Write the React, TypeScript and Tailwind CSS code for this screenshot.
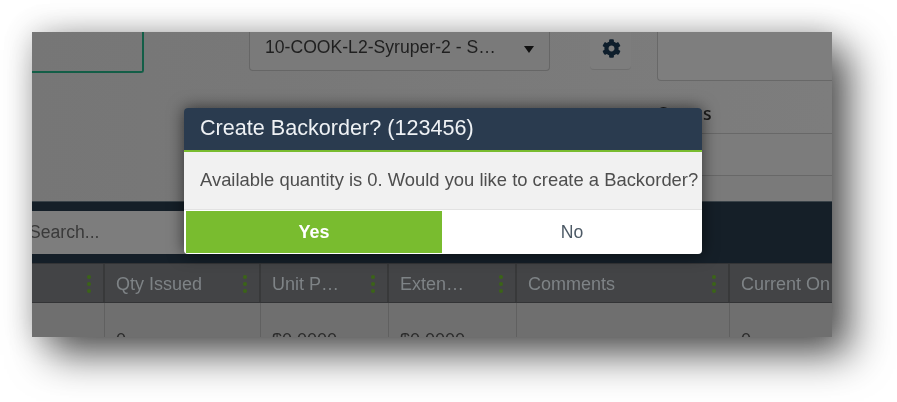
import { FaCog } from "react-icons/fa";

const columns = [
  { title: "", width: "w-[73px]", value: "" },
  { title: "Qty Issued", width: "w-[156px]", value: "0" },
  { title: "Unit P…", width: "w-[128px]", value: "$0.0000" },
  { title: "Exten…", width: "w-[128px]", value: "$0.0000" },
  { title: "Comments", width: "w-[213px]", value: "" },
  { title: "Current On Hand", width: "w-[160px]", value: "0" },
];

const Kebab = () => (
  <div className="flex flex-col gap-[3px]">
    <span className="w-[4px] h-[4px] rounded-full bg-[#3b6418]" />
    <span className="w-[4px] h-[4px] rounded-full bg-[#3b6418]" />
    <span className="w-[4px] h-[4px] rounded-full bg-[#3b6418]" />
  </div>
);

export default function App() {
  return (
    <div className="w-[897px] h-[402px] bg-white pt-8 pl-8 font-['Liberation_Sans',Arial,sans-serif] overflow-hidden">
      <div className="relative w-[800px] h-[305px] bg-[#797979] shadow-[18px_18px_38px_rgba(0,0,0,0.64),0_0_28px_rgba(0,0,0,0.2)]">
        <div className="relative w-full h-full overflow-hidden blur-[0.4px]">
          {/* top form area */}
          <div className="flex items-start h-[169px] bg-gradient-to-r from-[#767676] to-[#7d7d7d]">
            <div className="w-[112px] h-[41px] shrink-0 border-r-2 border-b-2 border-[#135e47] rounded-br-[3px]" />
            <div className="ml-[105px] w-[301px] h-[39px] shrink-0 flex items-center justify-between pl-[15px] pr-[15px] border-r border-b border-l border-[#666] rounded-b-[4px] bg-[#7a7a7a] text-[17.6px] text-[#1f1f1f]">
              <span className="truncate w-[236px] pb-[7px]">10-COOK-L2-Syruper-2 - S…</span>
              <span className="mb-[3px] w-0 h-0 border-x-[5px] border-x-transparent border-t-[7px] border-t-[#111]" />
            </div>
            <div className="ml-[40px] w-[41px] h-[38px] shrink-0 flex items-center justify-center rounded-b-[4px] bg-[#7d7d7d] border-b border-[#6f6f6f]">
              <FaCog className="w-[19px] h-[19px] mb-[4px] ml-[1px] text-[#0e1e2c]" />
            </div>
            <div className="ml-[26px] flex-1 flex flex-col">
              <div className="h-[49px] border-l border-b border-[#686868] rounded-bl-[4px] bg-[#7e7e7e]" />
              <div className="ml-[1px] mt-[22px] h-[20px] text-[17.6px] leading-[20px] font-semibold font-['Open_Sans',sans-serif] text-[#1c1c1c]">Status</div>
              <div className="mt-[10px] h-[43px] border-y border-[#686868] bg-[#7c7c7c]" />
              <div className="h-[25px] bg-[#7a7a7a]" />
            </div>
          </div>

          {/* search band */}
          <div className="h-[62px] bg-[#151f28] flex items-center border-t border-[#3a4349]">
            <div className="-ml-[3px] w-[160px] h-[43px] pb-[1px] flex items-center bg-[#7d7d7d] text-[17.6px] text-[#3a3a3a]">Search...</div>
          </div>

          {/* grid */}
          <div className="flex h-[40px] bg-[#434446] border-y border-[#333436]">
            {columns.map((col, i) => (
              <div key={i} className={`${col.width} shrink-0 flex items-center justify-between pt-[2px] pl-[11px] pr-[12px] border-r-2 border-[#38393a] text-[18px] text-[#7e8386] whitespace-nowrap overflow-hidden`}>
                <span>{col.title}</span>
                {i < 5 && <Kebab />}
              </div>
            ))}
          </div>
          <div className="flex h-[40px] bg-[#6f6f6f]">
            {columns.map((col, i) => (
              <div key={i} className={`${col.width} shrink-0 pl-[11px] pt-[27px] border-r border-[#606060] text-[18px] leading-[20px] text-[#2a2a2a]`}>
                {col.value}
              </div>
            ))}
          </div>

          {/* dialog */}
          <div className="absolute left-[152px] top-[76px] w-[518px] h-[146px] flex flex-col rounded-[4px] overflow-hidden shadow-[0_0_16px_rgba(0,0,0,0.6)]">
            <div className="h-[42px] shrink-0 bg-[#2a3b4f] pl-[16px] pb-[2px] flex items-center text-[21.6px] text-[#eef1f4] whitespace-nowrap">Create Backorder? (123456)</div>
            <div className="h-[2px] shrink-0 bg-[#79bc2f]" />
            <div className="h-[58px] shrink-0 bg-[#f1f1f1] border-b border-[#e2e2e2] pl-[16px] pb-[2px] flex items-center text-[18.4px] text-[#4e4e4e] whitespace-nowrap">
              Available quantity is 0. Would you like to create a Backorder?
            </div>
            <div className="flex flex-1 bg-white">
              <button className="w-[256px] ml-[2px] mt-[1px] mb-[1px] bg-[#79bc2f] text-white text-[18px] font-bold">Yes</button>
              <button className="flex-1 text-[#4d5a66] text-[17.6px]">No</button>
            </div>
          </div>
        </div>
      </div>
    </div>
  );
}
